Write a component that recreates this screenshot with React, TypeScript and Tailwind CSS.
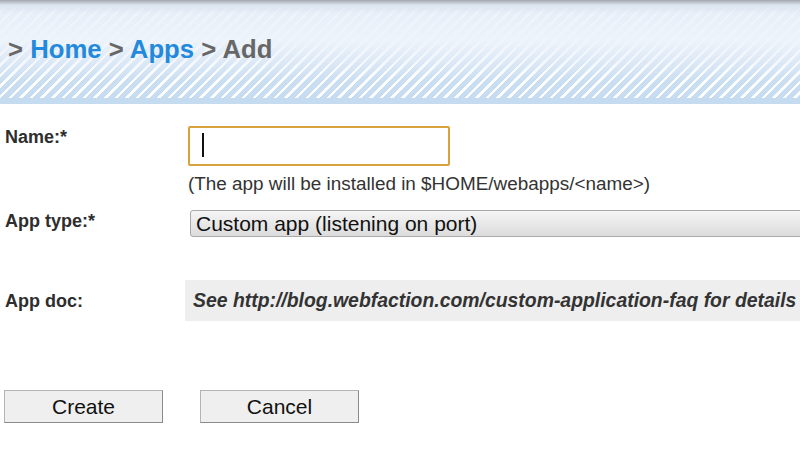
import { useState } from 'react';

const font = "font-['Liberation_Sans',Arial,sans-serif]";

export default function App() {
  const [name, setName] = useState('');

  return (
    <main className={`relative h-[468px] w-[800px] overflow-hidden bg-white ${font}`}>
      {/* Breadcrumb header */}
      <div className="h-[104px] border-b-[6px] border-[#c4dbf0] bg-[image:linear-gradient(to_bottom,#a2a7ad_0px,#dbe4ef_5px,rgba(234,241,250,0.8)_14px,rgba(238,244,251,0.96)_40%,rgba(232,240,250,0.55)_62%,rgba(215,230,246,0.05)_82%,rgba(205,224,243,0)_100%),repeating-linear-gradient(135deg,#ffffff_0px,#ffffff_2.5px,rgba(255,255,255,0)_2.5px,rgba(255,255,255,0)_7.5px),linear-gradient(to_bottom,#dce7f4,#c6dcf1)] pl-[8px] pt-[37px]">
        <p className="text-[25.7px] font-bold leading-[25px] text-[#676767]">
          &gt; <a className="text-[#2389dd]">Home</a> &gt;{' '}
          <a className="text-[#2389dd]">Apps</a> &gt; Add
        </p>
      </div>

      {/* Form */}
      <form className="pl-[5px]" onSubmit={(e) => e.preventDefault()}>
        <div className="mt-[22px] flex">
          <label className="w-[180px] shrink-0 text-[18px] font-bold leading-[22px] text-[#2e2e2e]">
            Name:*
          </label>
          <div className="ml-[3px]">
            <div className="relative">
              <input
                value={name}
                onChange={(e) => setName(e.target.value)}
                className="block h-[40px] w-[262px] rounded-[2px] border-2 border-[#d9a33b] bg-white px-[13px] text-[19px] outline-none"
              />
              {name.length === 0 && (
                <span className="absolute left-[14px] top-[7px] h-[24px] w-[2px] bg-[#111]" />
              )}
            </div>
            <p className="mt-[7px] text-[18.9px] leading-[22px] text-[#333]">
              (The app will be installed in $HOME/webapps/&lt;name&gt;)
            </p>
          </div>
        </div>

        <div className="mt-[15px] flex">
          <label className="w-[180px] shrink-0 text-[18px] font-bold leading-[22px] text-[#2e2e2e]">
            App type:*
          </label>
          <select className="ml-[5px] h-[27px] w-[640px] shrink-0 appearance-none rounded-[3px] border border-[#a9a9a9] bg-[image:linear-gradient(to_bottom,#f5f5f5,#dcdcdc)] pl-[5px] text-[21px] leading-[25px] text-[#111] outline-none">
            <option>Custom app (listening on port)</option>
          </select>
        </div>

        <div className="mt-[43px] flex items-center">
          <label className="w-[180px] shrink-0 text-[18px] font-bold leading-[22px] text-[#2e2e2e]">
            App doc:
          </label>
          <div className="flex h-[41px] w-[640px] shrink-0 items-center bg-[#eeeeee] pl-[8px] text-[19.4px] font-bold italic text-[#333]">
            See http://blog.webfaction.com/custom-application-faq for details
          </div>
        </div>

        <div className="mt-[69px] flex gap-[37px]">
          <button
            type="submit"
            className="-ml-[1px] h-[33px] w-[159px] border border-[#b4b4b4] border-b-[#8a8a8a] border-r-[#8a8a8a] bg-[#efefef] text-[21px] leading-[31px] text-[#111]"
          >
            Create
          </button>
          <button
            type="button"
            className="h-[33px] w-[159px] border border-[#b4b4b4] border-b-[#8a8a8a] border-r-[#8a8a8a] bg-[#efefef] text-[21px] leading-[31px] text-[#111]"
          >
            Cancel
          </button>
        </div>
      </form>
    </main>
  );
}
